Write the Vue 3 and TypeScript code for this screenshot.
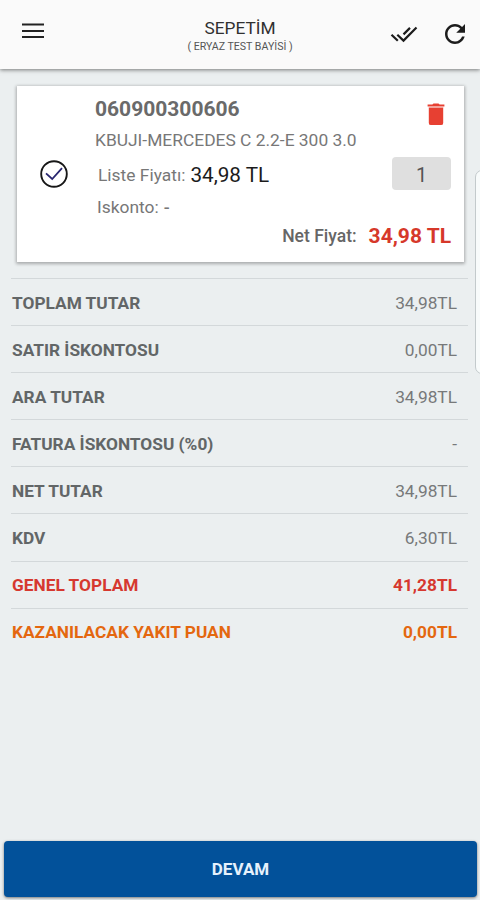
<script setup lang="ts">
interface SummaryRow {
  label: string
  value: string
  tone?: 'total' | 'points'
}

const rows: SummaryRow[] = [
  { label: 'TOPLAM TUTAR', value: '34,98TL' },
  { label: 'SATIR İSKONTOSU', value: '0,00TL' },
  { label: 'ARA TUTAR', value: '34,98TL' },
  { label: 'FATURA İSKONTOSU (%0)', value: '-' },
  { label: 'NET TUTAR', value: '34,98TL' },
  { label: 'KDV', value: '6,30TL' },
  { label: 'GENEL TOPLAM', value: '41,28TL', tone: 'total' },
  { label: 'KAZANILACAK YAKIT PUAN', value: '0,00TL', tone: 'points' },
]
</script>

<template>
  <div class="screen">
    <header class="bar">
      <button class="icon-btn" aria-label="Menu">
        <svg width="24" height="16" viewBox="0 0 24 16">
          <path d="M1 1.4h22M1 8h22M1 14.1h22" stroke="#222" stroke-width="2" />
        </svg>
      </button>
      <div class="titles">
        <h1>SEPETİM</h1>
        <p>( ERYAZ TEST BAYİSİ )</p>
      </div>
      <div class="actions">
        <button class="icon-btn" aria-label="Select all">
          <svg width="28" height="18" viewBox="0 0 28 18">
            <path d="M1.5 8.8l6.3 6M7.3 8.8l6.2 5.8L26.5 1.5M13.5 8.4L20 1.9" fill="none" stroke="#1c1c1c" stroke-width="2.2" />
          </svg>
        </button>
        <button class="icon-btn refresh" aria-label="Refresh">
          <svg width="20" height="20" viewBox="4 4 16 16">
            <path d="M17.65 6.35C16.2 4.9 14.21 4 12 4c-4.42 0-7.99 3.58-7.99 8s3.57 8 7.99 8c3.73 0 6.84-2.55 7.73-6h-2.08c-.82 2.33-3.04 4-5.65 4-3.31 0-6-2.69-6-6s2.69-6 6-6c1.66 0 3.14.69 4.22 1.78L13 11h7V4l-2.35 2.35z" fill="#1c1c1c" />
          </svg>
        </button>
      </div>
    </header>

    <main>
      <section class="card">
        <svg class="check" width="28" height="28" viewBox="0 0 28 28" fill="none">
          <circle cx="14" cy="14" r="12.8" stroke="#171717" stroke-width="1.9" />
          <path d="M6 13.4l6.2 5.6L22 8.2" stroke="#29266f" stroke-width="1.8" />
        </svg>
        <div class="info">
          <div class="line code-line">
            <strong class="code">060900300606</strong>
            <svg class="trash" width="18" height="23" viewBox="0 0 18 23" fill="#e74032">
              <path d="M.6 1.4h4.8L6.5.4h5L12.6 1.4h4.8v2.2H.6zM1.8 4.6h14.4v15.3a2.2 2.2 0 0 1-2.2 2.2H4a2.2 2.2 0 0 1-2.2-2.2z" />
              <path d="M1.8 3.6h14.4v1H1.8z" fill="#f3a79f" />
            </svg>
          </div>
          <div class="line name">KBUJI-MERCEDES C 2.2-E 300 3.0</div>
          <div class="line price-line">
            <span class="muted">Liste Fiyatı:</span>
            <span class="price">34,98 TL</span>
            <span class="qty">1</span>
          </div>
          <div class="line discount">Iskonto: <span class="dash">-</span></div>
          <div class="line net">
            <span class="net-label">Net Fiyat:</span>
            <span class="net-value">34,98 TL</span>
          </div>
        </div>
      </section>

      <dl class="summary">
        <div v-for="row in rows" :key="row.label" class="row" :class="row.tone">
          <dt>{{ row.label }}</dt>
          <dd>{{ row.value }}</dd>
        </div>
      </dl>
    </main>

    <footer>
      <button class="next">DEVAM</button>
    </footer>
    <div class="edge-panel"></div>
  </div>
</template>

<style>
body {
  margin: 0;
  background: #ebeff0;
}
</style>

<style scoped>
.screen {
  position: relative;
  box-sizing: border-box;
  width: 480px;
  height: 900px;
  overflow: hidden;
  display: flex;
  flex-direction: column;
  background: #ebeff0;
  color: #626667;
  font-family: Roboto, "Liberation Sans", sans-serif;
}
button {
  border: 0;
  padding: 0;
  font-family: inherit;
}
.icon-btn {
  display: flex;
  background: none;
}
.bar {
  box-sizing: border-box;
  height: 69px;
  padding: 0 15px 0 21px;
  display: grid;
  grid-template-columns: 100px 1fr 106px;
  align-items: center;
  background: #fafafa;
  box-shadow: 0 1px 4px rgba(0, 0, 0, 0.5);
}
.bar > .icon-btn {
  margin-bottom: 7px;
}
.titles {
  text-align: center;
  margin-top: 4px;
}
h1 {
  margin: 0;
  font-size: 17.3px;
  line-height: 20px;
  font-weight: 400;
  color: #303030;
}
.titles p {
  margin: 0;
  font-size: 10.6px;
  line-height: 17px;
  color: #555;
  white-space: nowrap;
}
.actions {
  display: flex;
  justify-content: flex-end;
  align-items: center;
  gap: 27px;
}
.refresh {
  margin-top: -1px;
}
main {
  flex: 1;
}
.card {
  box-sizing: border-box;
  height: 176px;
  margin: 17px 16px 0 17px;
  padding: 10px 13px 0 23px;
  display: flex;
  background: #fff;
  box-shadow: 0 1px 3px 1px rgba(0, 0, 0, 0.28);
}
.check {
  margin-top: 64px;
  flex: none;
}
.info {
  flex: 1;
  margin-left: 27px;
}
.line {
  display: flex;
  align-items: center;
  white-space: nowrap;
}
.code-line {
  height: 27px;
  justify-content: space-between;
}
.code {
  margin-top: -2px;
  font-size: 21px;
  font-weight: 700;
  color: #6a6a6a;
}
.trash {
  margin: 9px 6px 0 0;
}
.name {
  height: 34px;
  font-size: 17.4px;
  color: #777;
}
.price-line {
  height: 36px;
  padding-left: 3px;
}
.muted {
  font-size: 17.4px;
  color: #777;
}
.price {
  margin-left: 5px;
  font-size: 20.7px;
  color: #1b1b1b;
}
.qty {
  margin: -4px 0 0 auto;
  width: 59px;
  height: 33px;
  line-height: 36px;
  border-radius: 4px;
  background: #dfdfdf;
  text-align: center;
  font-size: 20px;
  color: #555;
}
.discount {
  height: 27px;
  padding-left: 2px;
  font-size: 17.4px;
  color: #777;
}
.dash {
  margin-left: 5px;
  font-weight: 500;
}
.net {
  height: 31px;
  justify-content: flex-end;
  gap: 12px;
}
.net-label {
  font-size: 17.5px;
  font-weight: 500;
  color: #666;
}
.net-value {
  font-size: 21px;
  font-weight: 700;
  color: #d6382a;
}
.summary {
  margin: 16px 12px 0 11px;
}
.row {
  box-sizing: border-box;
  height: 47.1px;
  padding: 1px 11px 0 1px;
  display: flex;
  justify-content: space-between;
  align-items: center;
  border-top: 1.5px solid #d3d8da;
  font-size: 17.3px;
}
dt {
  font-weight: 700;
}
dd {
  margin: 0;
  color: #77797a;
}
.total,
.total dd {
  color: #d6382f;
  font-weight: 700;
}
.points,
.points dd {
  color: #e4670f;
  font-weight: 700;
}
footer {
  padding: 0 3px 3px 4px;
}
.next {
  display: block;
  width: 100%;
  height: 56px;
  border-radius: 4px;
  background: #02519a;
  color: #e6f1fc;
  font-size: 17px;
  font-weight: 700;
  box-shadow: 0 1px 3px rgba(0, 0, 0, 0.5);
}
.edge-panel {
  position: absolute;
  top: 170px;
  right: -12px;
  box-sizing: border-box;
  width: 17px;
  height: 204px;
  border: 1px solid #c3cacc;
  border-radius: 7px;
  background: #f8fbfb;
}
</style>
